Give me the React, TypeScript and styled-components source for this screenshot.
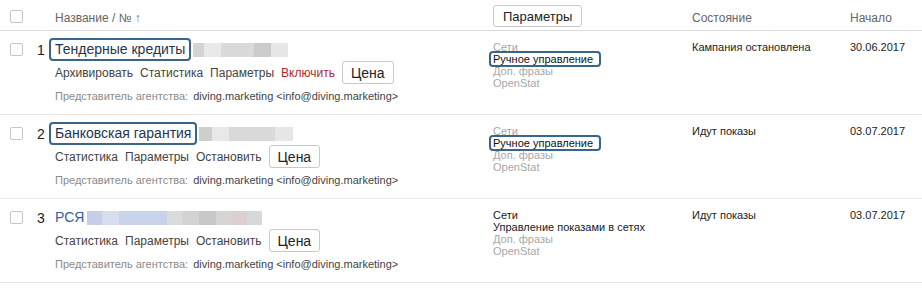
import React from 'react'
import styled, { createGlobalStyle } from 'styled-components'

interface Segment {
  w: number
  c: string
}

interface Action {
  label: string
  danger?: boolean
}

interface Param {
  text: string
  active?: boolean
  boxed?: boolean
}

interface Campaign {
  id: number
  name: string
  boxed: boolean
  blur: Segment[]
  actions: Action[]
  params: Param[]
  status: string
  date: string
}

const agentName = 'diving.marketing <info@diving.marketing>'

const campaigns: Campaign[] = [
  {
    id: 1,
    name: 'Тендерные кредиты',
    boxed: true,
    blur: [
      { w: 11, c: '#d4d4d4' },
      { w: 17, c: '#e9e9e9' },
      { w: 33, c: '#dadada' },
      { w: 17, c: '#cbcbcb' },
      { w: 17, c: '#e6e6e6' },
    ],
    actions: [
      { label: 'Архивировать' },
      { label: 'Статистика' },
      { label: 'Параметры' },
      { label: 'Включить', danger: true },
    ],
    params: [
      { text: 'Сети' },
      { text: 'Ручное управление', active: true, boxed: true },
      { text: 'Доп. фразы' },
      { text: 'OpenStat' },
    ],
    status: 'Кампания остановлена',
    date: '30.06.2017',
  },
  {
    id: 2,
    name: 'Банковская гарантия',
    boxed: true,
    blur: [
      { w: 13, c: '#cfcfcf' },
      { w: 17, c: '#e8e8e8' },
      { w: 46, c: '#d9d9d9' },
      { w: 18, c: '#e6e6e6' },
    ],
    actions: [{ label: 'Статистика' }, { label: 'Параметры' }, { label: 'Остановить' }],
    params: [
      { text: 'Сети' },
      { text: 'Ручное управление', active: true, boxed: true },
      { text: 'Доп. фразы' },
      { text: 'OpenStat' },
    ],
    status: 'Идут показы',
    date: '03.07.2017',
  },
  {
    id: 3,
    name: 'РСЯ',
    boxed: false,
    blur: [
      { w: 15, c: '#c5d0e8' },
      { w: 17, c: '#d5ddef' },
      { w: 48, c: '#c8d2ea' },
      { w: 15, c: '#dadcdc' },
      { w: 17, c: '#d3d3d3' },
      { w: 17, c: '#c7c7c7' },
      { w: 16, c: '#d5d5d5' },
      { w: 15, c: '#dbcfcf' },
      { w: 15, c: '#d6d9db' },
    ],
    actions: [{ label: 'Статистика' }, { label: 'Параметры' }, { label: 'Остановить' }],
    params: [
      { text: 'Сети', active: true },
      { text: 'Управление показами в сетях', active: true },
      { text: 'Доп. фразы' },
      { text: 'OpenStat' },
    ],
    status: 'Идут показы',
    date: '03.07.2017',
  },
]

const App: React.FC = () => {
  return (
    <>
      <GlobalStyle />
      <Table>
        <HeaderRow>
          <CheckCell>
            <Checkbox />
          </CheckCell>
          <HeaderText $indent={6}>Название / № ↑</HeaderText>
          <HeaderParams>
            <Button>Параметры</Button>
          </HeaderParams>
          <HeaderText>Состояние</HeaderText>
          <HeaderText>Начало</HeaderText>
        </HeaderRow>

        {campaigns.map((c) => (
          <Row key={c.id}>
            <CheckCell $top={7}>
              <Checkbox />
              <Num>{c.id}</Num>
            </CheckCell>
            <NameCell>
              <TitleLine>
                <Title $boxed={c.boxed}>{c.name}</Title>
                <Blur $boxed={c.boxed}>
                  {c.blur.map((s, i) => (
                    <BlurPart key={i} style={{ width: s.w, background: s.c }} />
                  ))}
                </Blur>
              </TitleLine>
              <Actions>
                {c.actions.map((a) => (
                  <ActionLink key={a.label} $danger={a.danger}>
                    {a.label}
                  </ActionLink>
                ))}
                <Button $small>Цена</Button>
              </Actions>
              <Agent>
                <span>Представитель агентства:</span> <b>{agentName}</b>
              </Agent>
            </NameCell>
            <ParamsCell>
              {c.params.map((p) => (
                <ParamLine key={p.text} $active={p.active}>
                  {p.boxed ? <ParamBox>{p.text}</ParamBox> : p.text}
                </ParamLine>
              ))}
            </ParamsCell>
            <TextCell>{c.status}</TextCell>
            <TextCell>{c.date}</TextCell>
          </Row>
        ))}
      </Table>
    </>
  )
}

const GlobalStyle = createGlobalStyle`
  body {
    margin: 0;
    background: #fff;
    font-family: 'Liberation Sans', Arial, sans-serif;
    color: #222;
  }
`

const Table = styled.div`
  width: 922px;
`

const Grid = styled.div`
  display: grid;
  grid-template-columns: 49px 444px 199px 158px 1fr;
`

const HeaderRow = styled(Grid)`
  height: 30px;
  border-bottom: 1px solid #dcdcdc;
  align-items: center;
`

const Row = styled(Grid)`
  height: 83px;
  border-bottom: 1px solid #e8e8e8;
  align-items: start;
`

const CheckCell = styled.div<{ $top?: number }>`
  display: flex;
  align-items: center;
  height: 23px;
  padding-left: 10px;
  padding-top: ${(p) => p.$top ?? 3}px;
`

const Checkbox = styled.span`
  box-sizing: border-box;
  width: 13px;
  height: 13px;
  border: 1px solid #c6c6c6;
  border-radius: 2px;
  background: #fff;
`

const Num = styled.span`
  margin-left: 14px;
  font-size: 14px;
  color: #222;
`

const HeaderText = styled.div<{ $indent?: number }>`
  padding-top: 5px;
  padding-left: ${(p) => p.$indent ?? 0}px;
  font-size: 12px;
  color: #666;
`

const HeaderParams = styled.div`
  padding-top: 2px;
`

const Button = styled.button<{ $small?: boolean }>`
  box-sizing: border-box;
  height: ${(p) => (p.$small ? 23 : 22)}px;
  padding: 0 ${(p) => (p.$small ? 8 : 9)}px;
  border: 1px solid #c8c8c8;
  border-radius: 3px;
  background: #fff;
  font-family: inherit;
  font-size: ${(p) => (p.$small ? 14 : 13)}px;
  color: #222;
`

const NameCell = styled.div`
  padding: 7px 0 0 6px;
  display: flex;
  flex-direction: column;
`

const TitleLine = styled.div`
  display: flex;
  align-items: center;
`

const Title = styled.span<{ $boxed: boolean }>`
  box-sizing: border-box;
  margin-left: -6px;
  padding: 1px 4px;
  border: 2px solid ${(p) => (p.$boxed ? '#386589' : 'transparent')};
  border-radius: 4px;
  line-height: 17px;
  font-size: 14px;
  color: ${(p) => (p.$boxed ? '#1f3550' : '#3560a4')};
`

const Blur = styled.span<{ $boxed: boolean }>`
  display: flex;
  height: 14px;
  margin-left: ${(p) => (p.$boxed ? 2 : -3)}px;
  filter: blur(0.6px);
`

const BlurPart = styled.span`
  height: 100%;
`

const Actions = styled.div`
  display: flex;
  align-items: center;
  gap: 7px;
  height: 23px;
`

const ActionLink = styled.span<{ $danger?: boolean }>`
  font-size: 12px;
  color: ${(p) => (p.$danger ? '#b3261e' : '#444')};
`

const Agent = styled.div`
  margin-top: 5px;
  font-size: 11px;
  line-height: 14px;
  color: #8a8a8a;
  white-space: pre;

  b {
    font-weight: normal;
    color: #444;
    margin-left: 2px;
  }
`

const ParamsCell = styled.div`
  padding-top: 10px;
  display: flex;
  flex-direction: column;
  align-items: flex-start;
`

const ParamLine = styled.div<{ $active?: boolean }>`
  font-size: 11px;
  line-height: 12px;
  color: ${(p) => (p.$active ? '#1a1a1a' : '#a8a8a8')};
`

const ParamBox = styled.span`
  display: inline-block;
  margin: -2px 0 -2px -4px;
  padding: 0 6px 0 2px;
  border: 2px solid #386589;
  border-radius: 4px;
  line-height: 12px;
  color: #111;
  background: #fff;
`

const TextCell = styled.div`
  padding-top: 9px;
  font-size: 11px;
  line-height: 14px;
  color: #222;
`

export default App
